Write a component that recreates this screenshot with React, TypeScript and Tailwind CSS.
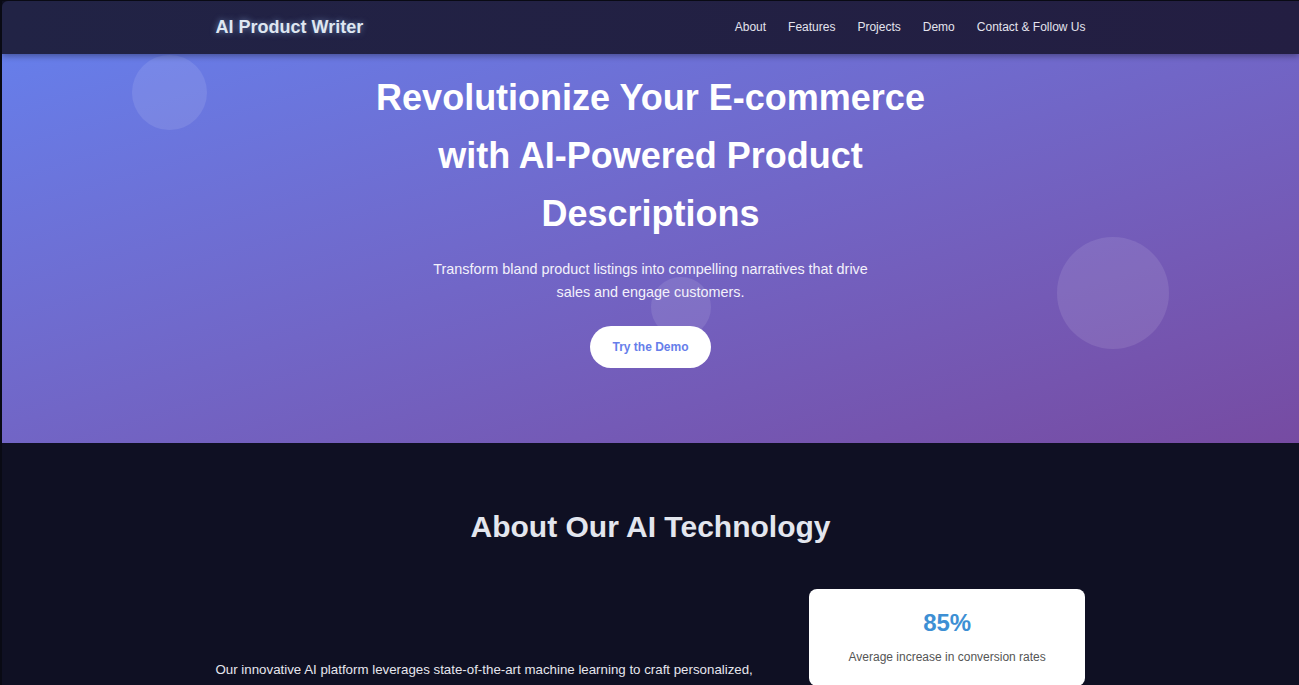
import { useState } from 'react';

const navLinks = ['About', 'Features', 'Projects', 'Demo', 'Contact & Follow Us'];

interface Stat {
  value: string;
  label: string;
}

const stats: Stat[] = [
  { value: '85%', label: 'Average increase in conversion rates' },
  { value: '10x', label: 'Faster content creation' },
];

function StatCard({ stat }: { stat: Stat }) {
  return (
    <div className="bg-white rounded-[8px] px-6 pt-[19px] pb-5 text-center">
      <div className="text-[24px] leading-[30px] font-bold text-[#3d8fd4]">{stat.value}</div>
      <p className="mt-[10px] text-[12px] leading-[18px] text-[#555]">{stat.label}</p>
    </div>
  );
}

export default function App() {
  const [active, setActive] = useState('');

  return (
    <div
      className="min-h-screen bg-[#0f1023] border-l-2 border-t border-[#090a14] overflow-hidden"
      style={{ fontFamily: '"Liberation Sans", Arial, sans-serif' }}
    >
      {/* Navbar */}
      <header className="relative z-10 h-[53px] bg-gradient-to-r from-[#212345] to-[#231e42] shadow-[0_2px_6px_rgba(0,0,0,0.35)] rounded-tl-[6px]">
        <div className="max-w-[870px] mx-auto h-full flex items-center justify-between">
          <a
            href="#"
            className="text-[18px] font-bold text-[#dfe7f1] [text-shadow:0_0_6px_rgba(160,200,255,0.55)]"
          >
            AI Product Writer
          </a>
          <nav className="flex items-center gap-[22px] pb-[2px]">
            {navLinks.map((link) => (
              <a
                key={link}
                href="#"
                onClick={() => setActive(link)}
                className={`text-[12px] ${active === link ? 'text-white' : 'text-[#e4e4ee]'} hover:text-white`}
              >
                {link}
              </a>
            ))}
          </nav>
        </div>
      </header>

      {/* Hero */}
      <section className="relative overflow-hidden bg-gradient-to-br from-[#667eea] to-[#764ba2] pt-[15px] pb-[75px]">
        <div className="absolute left-[130px] top-[1px] w-[75px] h-[75px] rounded-full bg-white/10" />
        <div className="absolute left-[649px] top-[223px] w-[60px] h-[60px] rounded-full bg-white/10" />
        <div className="absolute left-[1055px] top-[183px] w-[112px] h-[112px] rounded-full bg-white/10" />

        <div className="relative max-w-[870px] mx-auto flex flex-col items-center text-center">
          <h1 className="max-w-[600px] text-[36px] leading-[58px] font-bold text-white">
            Revolutionize Your E-commerce with AI-Powered Product Descriptions
          </h1>
          <p className="mt-[15px] max-w-[460px] text-[14.4px] leading-[23px] text-[#f3f1fb]">
            Transform bland product listings into compelling narratives that drive sales and engage customers.
          </p>
          <button className="mt-[22px] h-[42px] px-[22px] rounded-full bg-white text-[12px] font-bold text-[#667eea]">
            Try the Demo
          </button>
        </div>
      </section>

      {/* About */}
      <section className="pt-[66px] pb-16">
        <div className="max-w-[870px] mx-auto">
          <h2 className="text-center text-[30px] leading-[36px] font-bold text-[#e3e6ee]">About Our AI Technology</h2>
          <div className="mt-[44px] grid grid-cols-[2fr_1fr] gap-10">
            <div className="pt-[69px]">
              <p className="text-[13.3px] leading-[24px] text-[#e6e6ee]">
                Our innovative AI platform leverages state-of-the-art machine learning to craft personalized,
                SEO-optimized product descriptions that resonate with your target audience and boost sales.
              </p>
            </div>
            <div className="flex flex-col gap-5">
              {stats.map((s) => (
                <StatCard key={s.value} stat={s} />
              ))}
            </div>
          </div>
        </div>
      </section>
    </div>
  );
}
